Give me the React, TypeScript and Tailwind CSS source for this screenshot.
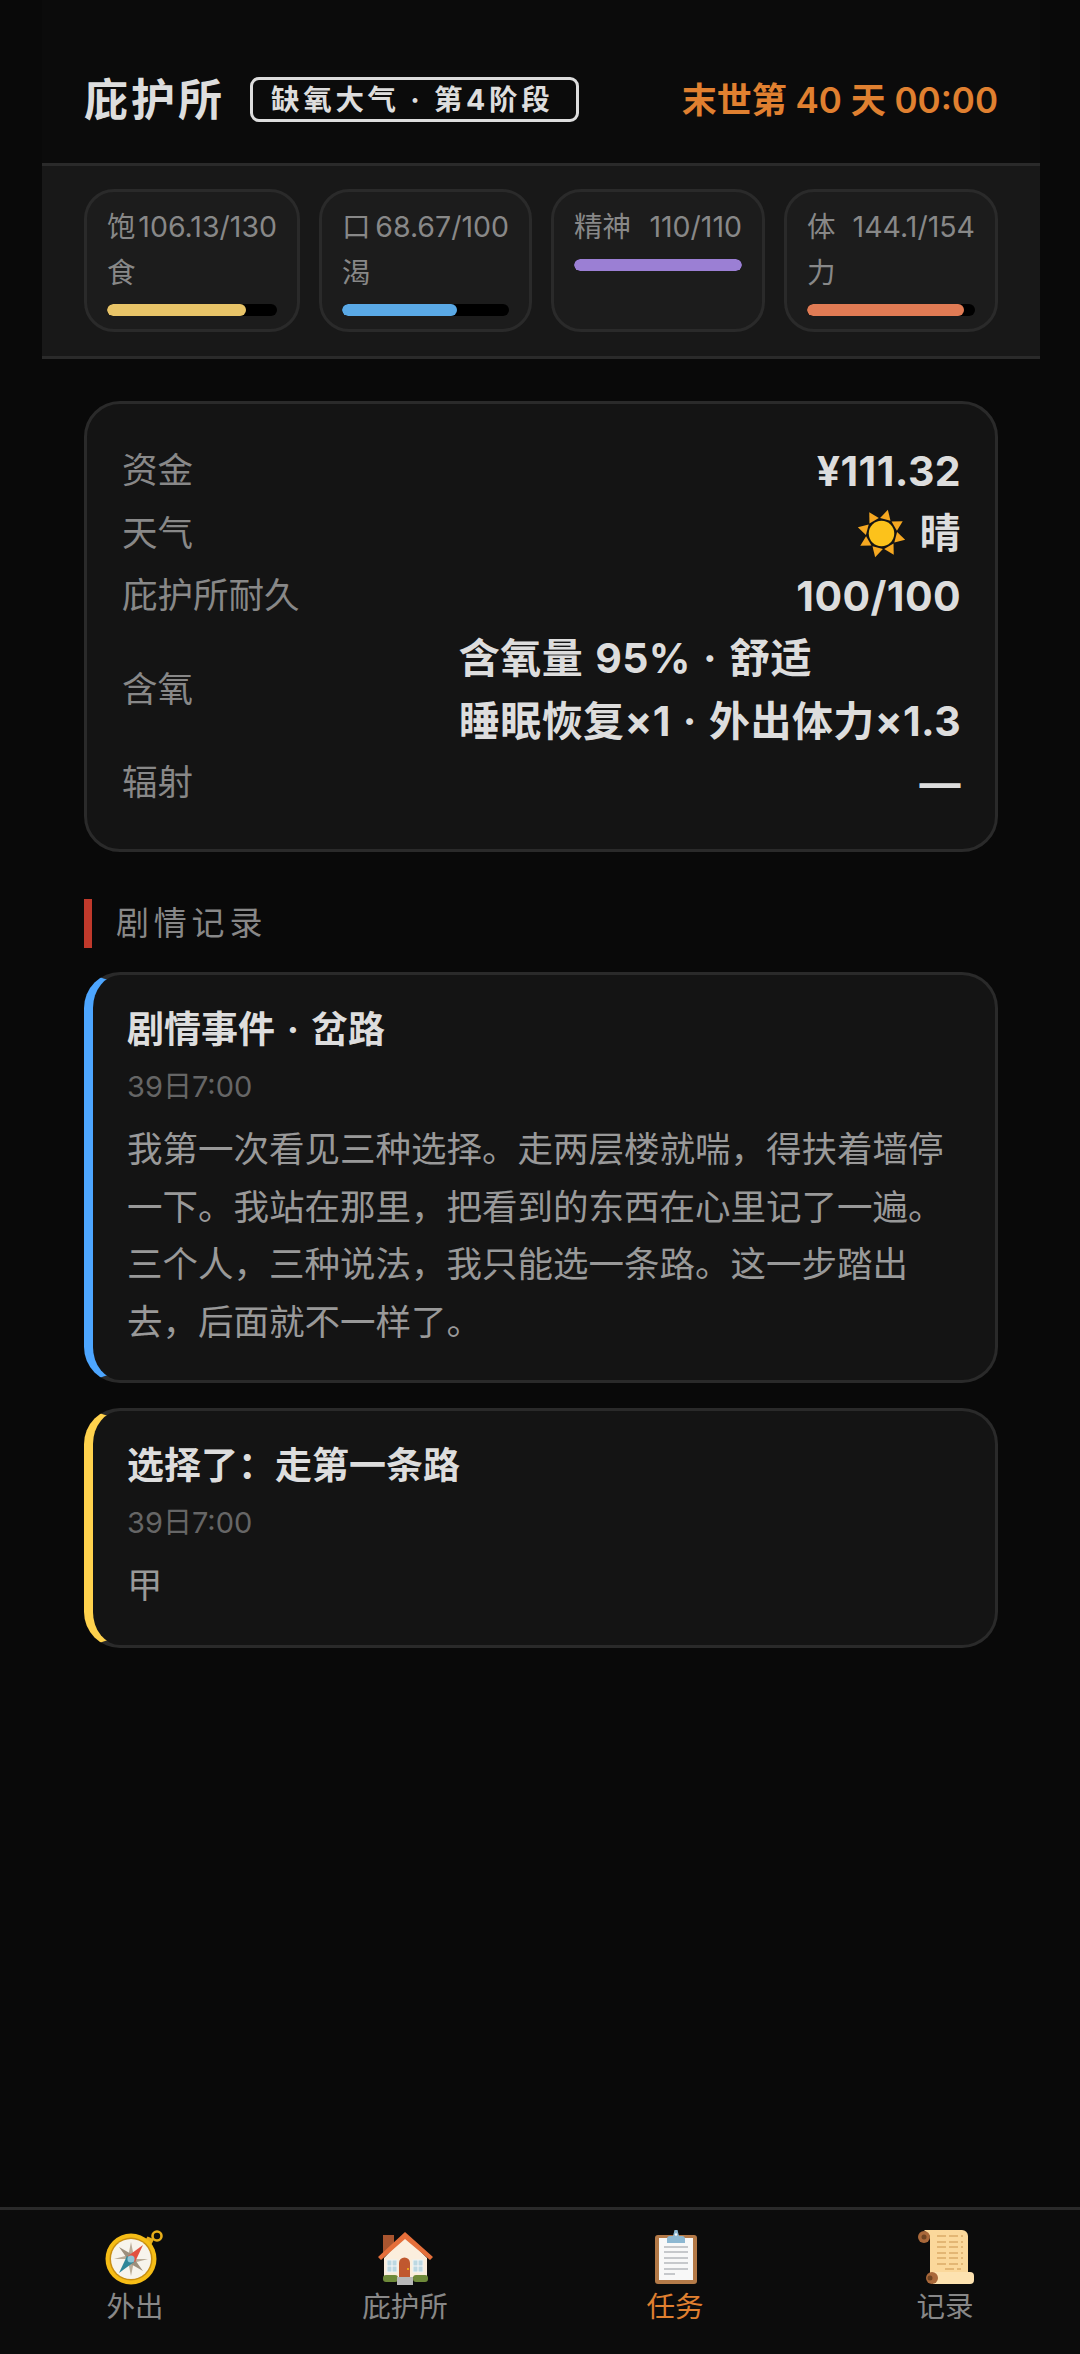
import React from "react";

const FONT = '[font-family:Inter,"Noto_Sans_CJK_SC",sans-serif]';

function Compass() {
  return (
    <svg viewBox="0 0 60 60" className="w-[60px] h-[60px]">
      <circle cx="52" cy="8" r="4.5" fill="none" stroke="#e8ae1a" strokeWidth="2.6" />
      <path d="M46 14L42 10L47 12Z" stroke="#e8ae1a" strokeWidth="3" />
      <circle cx="26" cy="31" r="25.5" fill="#f6bd16" />
      <circle cx="26" cy="31" r="21.5" fill="#c98f12" />
      <circle cx="26" cy="31" r="20" fill="#f7f4ec" />
      <path d="M26 31L9 31L24 27Z M26 31L43 31L28 35Z M26 14L23 29L29 29Z M26 48L23 33L29 33Z" fill="#b9ac98" />
      <path d="M14 19L28 27L24 33Z M38 43L24 35L28 29Z" fill="#9c8f7c" />
      <path d="M38 17L30 34L23 28Z" fill="#e2503f" />
      <path d="M14 45L22 28L29 34Z" fill="#2f8799" />
      <circle cx="26" cy="31" r="3.6" fill="#8cc5d6" />
    </svg>
  );
}
function House() {
  return (
    <svg viewBox="0 0 60 60" className="w-[60px] h-[60px]">
      <rect x="8" y="7" width="11" height="18" fill="#a9552f" />
      <path d="M30 8L52 30V49H9V30Z" fill="#fbeedd" />
      <path d="M30 4L3 29L6 32L30 11L55 32L58 29Z" fill="#e56f3a" />
      <rect x="12" y="32" width="10" height="12" fill="#bcd8e2" stroke="#eef4f4" strokeWidth="1" />
      <rect x="38" y="32" width="10" height="12" fill="#bcd8e2" stroke="#eef4f4" strokeWidth="1" />
      <path d="M17 32V44M12 38H22M43 32V44M38 38H48" stroke="#f6f6f6" strokeWidth="1" />
      <path d="M24 49V35a5.5 5.5 0 0 1 11 0V49Z" fill="#c0582f" />
      <circle cx="33" cy="41" r="1" fill="#f6bd16" />
      <rect x="8" y="47" width="15" height="7" rx="3" fill="#6e8a3a" />
      <rect x="38" y="47" width="15" height="7" rx="3" fill="#6e8a3a" />
      <rect x="22" y="49" width="16" height="8" fill="#b8b8b8" />
    </svg>
  );
}
function Clipboard() {
  return (
    <svg viewBox="0 0 60 60" className="w-[60px] h-[60px]">
      <rect x="10" y="7" width="42" height="49" rx="3" fill="#b47a48" />
      <rect x="14" y="10" width="34" height="42" fill="#f8f8f8" />
      <path d="M19 19H43M19 24H43M19 30H43M19 35H43M19 41H43M19 46H30" stroke="#b5b8bc" strokeWidth="1.6" />
      <path d="M22 15V11a3 3 0 0 1 3-3h3l1.5-6h3L34 8h3a3 3 0 0 1 3 3v4Z" fill="#8db8d2" />
      <circle cx="31" cy="6.5" r="1.2" fill="#f8f8f8" />
    </svg>
  );
}
function Scroll() {
  return (
    <svg viewBox="0 0 60 60" className="w-[60px] h-[60px]">
      <path d="M9 2H47a6 6 0 0 1 6 6V47H15V8Z" fill="#fbd89b" />
      <circle cx="9" cy="9" r="6" fill="#a9683a" />
      <circle cx="9" cy="9" r="2.5" fill="#6f4422" />
      <path d="M18 44H55a4 4 0 0 1 4 4v4a4 4 0 0 1-4 4H18Z" fill="#fde2b0" />
      <circle cx="17" cy="50" r="6" fill="#a9683a" />
      <circle cx="15" cy="50" r="2.5" fill="#6f4422" />
      <path d="M22 8H48M22 14H48M22 19H48M22 25H48M22 30H48M22 36H48M30 41H46" stroke="#dbab68" strokeWidth="1.3" strokeDasharray="9 3" />
    </svg>
  );
}
function Sun() {
  const rays = [15, 60, 105, 150, 195, 240, 285, 330];
  return (
    <svg viewBox="0 0 50 50" className="w-[49px] h-[49px] shrink-0">
      {rays.map((a) => (
        <path key={a} d="M25 0L30.5 10H19.5Z" fill="#f6a821" transform={`rotate(${a} 25 25)`} />
      ))}
      <circle cx="25" cy="25" r="13" fill="#fcc21b" />
    </svg>
  );
}

function Stat({ label, value, pct, color, wrap }: { label: string; value: string; pct: number; color: string; wrap?: boolean }) {
  return (
    <div className="rounded-[30px] border-[3px] border-[#2a2a2a] bg-[#1c1c1c] px-[20px] pt-[12px]">
      <div className="flex justify-between text-[28.5px] leading-[45.6px] text-[#888]">
        <span className={wrap ? "w-[29px] shrink-0 break-all" : "shrink-0"}>{label}</span>
        <span className="shrink-0">{value}</span>
      </div>
      <div className="mt-[9px] h-[12px] rounded-full bg-black overflow-hidden">
        <div className="h-full rounded-full" style={{ width: `${pct}%`, backgroundColor: color }} />
      </div>
    </div>
  );
}

function Row({ label, children }: { label: string; children: React.ReactNode }) {
  return (
    <div className="flex items-center justify-between">
      <span className="text-[35.5px] leading-[57.6px] text-[#888]">{label}</span>
      <div className="text-[41px] leading-[62.4px] font-bold tracking-[0.4px] [word-spacing:2px] text-[#ddd]">{children}</div>
    </div>
  );
}

function Entry({ border, title, date, body, pb }: { border: string; title: string; date: string; body: string; pb: string }) {
  return (
    <div className={`rounded-[36px] border-[3px] ${border} ${pb} border-[#2a2a2a] bg-[#141414] pl-[34px] pr-[36px] pt-[28px]`}>
      <div className="text-[37px] leading-[54px] font-bold [word-spacing:3px] text-[#ddd]">{title}</div>
      <div className="mt-[6px] text-[29px] leading-[48px] text-[#666]">{date}</div>
      <div className="mt-[10px] text-[35.5px] leading-[57.6px] text-[#999]">{body}</div>
    </div>
  );
}

function NavItem({ icon, label, active }: { icon: React.ReactNode; label: string; active?: boolean }) {
  return (
    <div className="flex flex-col items-center">
      {icon}
      <span className={`mt-[1px] text-[28.5px] leading-[36px] ${active ? "text-[#e08030]" : "text-[#888]"}`}>{label}</span>
    </div>
  );
}

export default function App() {
  return (
    <div className={`${FONT} h-[2354px] bg-[#090909] flex flex-col`}>
      <div className="ml-[42px] mr-[40px]">
        <header className="h-[163px] bg-[#0b0b0b] px-[42px] pt-[36px] flex items-center justify-between">
          <div className="flex items-center gap-[25px]">
            <span className="text-[44px] leading-[60px] font-bold tracking-[3px] text-[#ddd]">庇护所</span>
            <span className="rounded-[9px] border-[3px] border-[#ddd] pl-[18px] pr-[22px] text-[28.5px] leading-[39px] font-bold tracking-[3.7px] text-[#ddd]">缺氧大气 · 第4阶段</span>
          </div>
          <span className="text-[35px] leading-[48px] font-semibold text-[#e08030]">末世第 40 天 00:00</span>
        </header>
        <div className="h-[196px] bg-[#181818] border-y-[3px] border-[#2a2a2a] px-[42px] pt-[23px]">
          <div className="grid grid-cols-[216px_213px_214px_214px] gap-[19px] h-[143px]">
            <Stat label="饱食" value="106.13/130" pct={81.6} color="#e8c468" wrap />
            <Stat label="口渴" value="68.67/100" pct={68.67} color="#5aa9e6" wrap />
            <Stat label="精神" value="110/110" pct={100} color="#9b7fd4" />
            <Stat label="体力" value="144.1/154" pct={93.6} color="#e07b54" wrap />
          </div>
        </div>
      </div>

      <main className="ml-[84px] mr-[82px] mt-[42px] flex-1">
        <section className="h-[451px] rounded-[36px] border-[3px] border-[#2a2a2a] bg-[#141414] pl-[35px] pr-[34px] pt-[36px]">
          <Row label="资金">¥111.32</Row>
          <Row label="天气">
            <span className="flex items-center gap-[14px]"><Sun />晴</span>
          </Row>
          <Row label="庇护所耐久">100/100</Row>
          <Row label="含氧">
            <div>含氧量 95% · 舒适</div>
            <div>睡眠恢复×1 · 外出体力×1.3</div>
          </Row>
          <Row label="辐射">—</Row>
        </section>

        <div className="mt-[47px] flex items-center gap-[24px]">
          <div className="w-[8px] h-[49px] bg-[#c0392b]" />
          <span className="text-[33px] leading-[49px] tracking-[4.8px] text-[#888]">剧情记录</span>
        </div>

        <div className="mt-[24px] flex flex-col gap-[25px]">
          <Entry border="border-l-[9px] border-l-[#4da6ff]" pb="pb-[29px]" title="剧情事件 · 岔路" date="39日7:00" body={"我第一次看见三种选择。走两层楼就喘\uFF0C得扶着墙停一下。我站在那里\uFF0C把看到的东西在心里记了一遍。三个人\uFF0C三种说法\uFF0C我只能选一条路。这一步踏出去\uFF0C后面就不一样了。"} />
          <Entry border="border-l-[9px] border-l-[#ffd24d]" pb="pb-[30px]" title={"选择了\uFF1A走第一条路"} date="39日7:00" body="甲" />
        </div>
      </main>

      <nav className="h-[147px] bg-[#0c0c0c] border-t-[3px] border-[#2a2a2a] grid grid-cols-4 pt-[18px]">
        <NavItem icon={<Compass />} label="外出" />
        <NavItem icon={<House />} label="庇护所" />
        <NavItem icon={<Clipboard />} label="任务" active />
        <NavItem icon={<Scroll />} label="记录" />
      </nav>
    </div>
  );
}
